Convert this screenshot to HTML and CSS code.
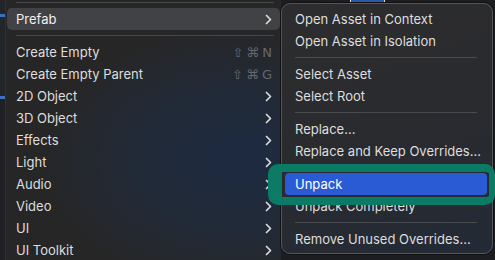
FILE: index.html
```html
<!DOCTYPE html>
<html lang="en">
<head>
  <meta charset="UTF-8" />
  <title>Prefab menu</title>
  <link rel="stylesheet" href="styles.css">
</head>
<body>
  <div class="stage">
    <div class="edge"></div>

    <div class="menu">
      <div class="sep"></div>
      <div class="item active"><span>Prefab</span><svg class="chev" viewBox="0 0 7 11"><polyline points="1.5,1.5 5.5,5.5 1.5,9.5" /></svg></div>
      <div class="sep"></div>
      <div class="item"><span>Create Empty</span><span class="key">⇧⌘N</span></div>
      <div class="item"><span>Create Empty Parent</span><span class="key">⇧⌘G</span></div>
      <div class="item"><span>2D Object</span><svg class="chev" viewBox="0 0 7 11"><polyline points="1.5,1.5 5.5,5.5 1.5,9.5" /></svg></div>
      <div class="item"><span>3D Object</span><svg class="chev" viewBox="0 0 7 11"><polyline points="1.5,1.5 5.5,5.5 1.5,9.5" /></svg></div>
      <div class="item"><span>Effects</span><svg class="chev" viewBox="0 0 7 11"><polyline points="1.5,1.5 5.5,5.5 1.5,9.5" /></svg></div>
      <div class="item"><span>Light</span><svg class="chev" viewBox="0 0 7 11"><polyline points="1.5,1.5 5.5,5.5 1.5,9.5" /></svg></div>
      <div class="item"><span>Audio</span><svg class="chev" viewBox="0 0 7 11"><polyline points="1.5,1.5 5.5,5.5 1.5,9.5" /></svg></div>
      <div class="item"><span>Video</span><svg class="chev" viewBox="0 0 7 11"><polyline points="1.5,1.5 5.5,5.5 1.5,9.5" /></svg></div>
      <div class="item"><span>UI</span><svg class="chev" viewBox="0 0 7 11"><polyline points="1.5,1.5 5.5,5.5 1.5,9.5" /></svg></div>
      <div class="item"><span>UI Toolkit</span><svg class="chev" viewBox="0 0 7 11"><polyline points="1.5,1.5 5.5,5.5 1.5,9.5" /></svg></div>
    </div>

    <div class="side">
      <div class="peek"><div class="peek-box"></div></div>
      <div class="submenu">
        <div class="sub-item">Open Asset in Context</div>
        <div class="sub-item">Open Asset in Isolation</div>
        <div class="sub-sep"></div>
        <div class="sub-item">Select Asset</div>
        <div class="sub-item">Select Root</div>
        <div class="sub-sep"></div>
        <div class="sub-item">Replace...</div>
        <div class="sub-item">Replace and Keep Overrides...</div>
        <div class="sub-sep"></div>
        <div class="sub-item selected">Unpack</div>
        <div class="sub-item">Unpack Completely</div>
        <div class="sub-sep"></div>
        <div class="sub-item">Remove Unused Overrides...</div>
      </div>
    </div>

    <div class="callout"></div>
  </div>
</body>
</html>
```

FILE: styles.css
```css
body { margin: 0; background: #1a1b1e; font-family: 'Inter', 'Liberation Sans', sans-serif; font-size: 13px; color: #dedede; overflow: hidden; }
.stage { position: relative; display: flex; width: 495px; height: 260px; overflow: hidden; background: #1c1d20; }

.edge { width: 5px; flex: none; background: linear-gradient(180deg, #22252a 0, #22252a 14px, #3c6fc4 14px, #3c6fc4 17px, #22252a 17px, #22252a 96px, #3c6fc4 96px, #3c6fc4 99px, #1f2125 99px); border-right: 1px solid #2f2f31; }

.menu { width: 273px; flex: none; margin-top: -3px; padding: 0 1px; background: radial-gradient(ellipse 240px 160px at 85% 62%, #1d2b42 0%, #222a37 45%, #262627 82%), #262626; }
.sep { height: 11px; display: flex; align-items: center; padding: 0 6px 0 9px; }
.sep::before { content: ''; flex: 1; height: 1px; background: #47484b; }
.item { height: 22px; display: flex; align-items: center; justify-content: space-between; padding: 0 8px 0 9px; border-radius: 5px; }
.item.active { background: #414245; color: #f0f0f0; }
.chev { width: 7px; height: 11px; fill: none; stroke: #dcdcdc; stroke-width: 1.7; stroke-linecap: round; stroke-linejoin: round; }
.key { font-family: 'DejaVu Sans', sans-serif; font-size: 13px; color: #65686d; letter-spacing: 3px; margin-right: -3px; }

.side { width: 212px; flex: none; display: flex; flex-direction: column; }
.peek { height: 3px; padding-left: 69px; }
.peek-box { width: 33px; height: 2px; border: 1px solid #dcdcdc; border-top: none; background: #2c5aa8; }
.submenu { height: 251px; box-sizing: border-box; padding: 4px 5px 3px 3px; border: 1px solid #55565a; border-radius: 9px; box-shadow: 0 0 0 1px #111; background: linear-gradient(160deg, #2d2d2f 0%, #2a2b2e 45%, #232a36 100%); }
.sub-item { height: 22px; display: flex; align-items: center; padding-left: 10px; border-radius: 4px; white-space: nowrap; }
.sub-item.selected { background: #2a5bd5; color: #fff; }
.sub-sep { height: 11px; display: flex; align-items: center; padding: 0 10px 0 10px; }
.sub-sep::before { content: ''; flex: 1; height: 1px; background: #4a4b4e; }

.callout { position: absolute; left: 268px; top: 164px; width: 227px; height: 41px; box-sizing: border-box; border: 8px solid #0c7b66; border-left-width: 14px; border-right-width: 6px; border-radius: 10px; }
```
